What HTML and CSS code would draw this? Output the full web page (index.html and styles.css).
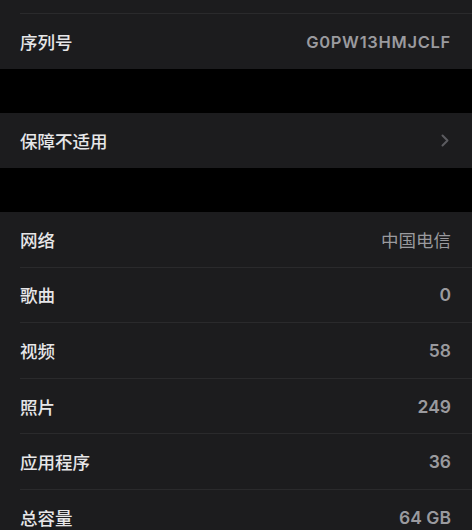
FILE: index.html
```html
<!DOCTYPE html>
<html lang="zh-CN">
<head>
<meta charset="utf-8">
<link rel="stylesheet" href="styles.css">
</head>
<body>
<div class="group">
  <div class="row top"><div class="inner"></div></div>
  <div class="row"><div class="inner last"><span class="label">序列号</span><span class="value serial">G0PW13HMJCLF</span></div></div>
</div>
<div class="gap"></div>
<div class="group">
  <div class="row"><div class="inner last"><span class="label">保障不适用</span>
    <svg class="chev" width="8" height="13" viewBox="0 0 8 13"><path d="M1.5 1.5 L6.5 6.5 L1.5 11.5" fill="none" stroke="#5c5c60" stroke-width="2" stroke-linecap="round" stroke-linejoin="round"/></svg>
  </div></div>
</div>
<div class="gap"></div>
<div class="group">
  <div class="row"><div class="inner"><span class="label">网络</span><span class="value cjk">中国电信</span></div></div>
  <div class="row"><div class="inner"><span class="label">歌曲</span><span class="value">0</span></div></div>
  <div class="row"><div class="inner"><span class="label">视频</span><span class="value">58</span></div></div>
  <div class="row"><div class="inner"><span class="label">照片</span><span class="value">249</span></div></div>
  <div class="row"><div class="inner"><span class="label">应用程序</span><span class="value">36</span></div></div>
  <div class="row"><div class="inner"><span class="label">总容量</span><span class="value">64 GB</span></div></div>
</div>
</body>
</html>
```
FILE: styles.css
```css
html, body {
  margin: 0;
  padding: 0;
  background: #000;
}
body {
  width: 472px;
  height: 530px;
  overflow: hidden;
  font-family: "Inter", "Noto Sans CJK SC", sans-serif;
  -webkit-font-smoothing: antialiased;
}
.group {
  background: #1c1c1e;
}
.row {
  padding-left: 20px;
}
.inner {
  height: 55px;
  display: flex;
  align-items: center;
  justify-content: space-between;
  padding-right: 21px;
  border-bottom: 1px solid #2a2a2c;
  box-sizing: content-box;
}
.group:last-child .inner {
  height: 54.6px;
}
.row.top .inner {
  height: 13px;
}
.inner.last {
  border-bottom: none;
}
.label {
  color: #e6e6e8;
  font-size: 17.5px;
  font-weight: 500;
  font-family: "Noto Sans CJK SC", sans-serif;
}
.value {
  color: #9a9a9e;
  font-size: 17.5px;
  font-weight: 600;
}
.value.cjk {
  font-family: "Noto Sans CJK SC", sans-serif;
  font-weight: 400;
}
.serial {
  font-size: 16.5px;
  letter-spacing: 0.7px;
}
.chev {
  margin-right: 2px;
}
.gap {
  height: 44px;
}
```
